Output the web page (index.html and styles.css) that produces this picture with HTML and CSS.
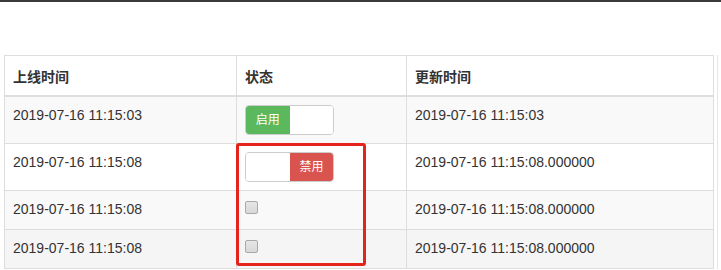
FILE: index.html
```html
<!DOCTYPE html>
<html lang="zh-CN">
<head>
<meta charset="utf-8">
<title>状态</title>
<link rel="stylesheet" href="styles.css">
</head>
<body>
<div class="topbar"></div>
<div class="spacer"></div>
<div class="wrap">
  <table class="grid">
    <thead>
      <tr>
        <th class="c1">上线时间</th>
        <th class="c2">状态</th>
        <th class="c3">更新时间</th>
      </tr>
    </thead>
    <tbody>
      <tr class="odd">
        <td>2019-07-16 11:15:03</td>
        <td><span class="switch"><span class="seg on">启用</span><span class="seg blank"></span></span></td>
        <td>2019-07-16 11:15:03</td>
      </tr>
      <tr>
        <td>2019-07-16 11:15:08</td>
        <td><span class="switch"><span class="seg blank"></span><span class="seg off">禁用</span></span></td>
        <td>2019-07-16 11:15:08.000000</td>
      </tr>
      <tr class="odd short">
        <td>2019-07-16 11:15:08</td>
        <td><input type="checkbox" class="chk"></td>
        <td>2019-07-16 11:15:08.000000</td>
      </tr>
      <tr class="hover short">
        <td>2019-07-16 11:15:08</td>
        <td><input type="checkbox" class="chk"></td>
        <td>2019-07-16 11:15:08.000000</td>
      </tr>
    </tbody>
  </table>
  <div class="highlight"></div>
</div>
</body>
</html>
```

FILE: styles.css
```css
html, body {
  margin: 0;
  padding: 0;
  background: #fff;
}
body {
  font-family: "Liberation Sans", Arial, "Noto Sans CJK SC", sans-serif;
  font-size: 14px;
  line-height: 20px;
  color: #333;
  width: 721px;
  height: 270px;
  overflow: hidden;
}
.topbar {
  height: 2px;
  background: #3a3a3a;
}
.spacer {
  height: 53px;
}
.wrap {
  position: relative;
  margin-left: 4px;
  width: 714px;
  border-right: 1px solid #e6e6e6;
  box-sizing: border-box;
}
.grid {
  table-layout: fixed;
  border-collapse: separate;
  border-spacing: 0;
  width: 710px;
  box-sizing: border-box;
  border-top: 1px solid #ddd;
  border-left: 1px solid #ddd;
}
.grid th, .grid td {
  box-sizing: border-box;
  text-align: left;
  vertical-align: top;
  border-right: 1px solid #ddd;
  border-bottom: 1px solid #ddd;
  padding: 8px 8px 8px;
  white-space: nowrap;
}
.grid th {
  font-weight: bold;
  padding: 11px 8px 8px;
  border-bottom: 2px solid #ddd;
  background: #fff;
}
.c1 { width: 232px; }
.c2 { width: 170px; }
.c3 { width: 307px; }
.grid tr.odd td { background: #f9f9f9; }
.grid tr.hover td { background: #f5f5f5; }
.grid tr.short td { padding: 8px 8px 10px; }

.switch {
  display: inline-flex;
  height: 30px;
  width: 89px;
  box-sizing: border-box;
  border: 1px solid #ccc;
  border-radius: 4px;
  overflow: hidden;
  vertical-align: top;
  background: #fff;
}
.seg {
  display: block;
  width: 44px;
  height: 28px;
  line-height: 28px;
  font-size: 12px;
  text-align: center;
  color: #fff;
}
.seg.on { background: #5cb85c; }
.seg.off { background: #d9534f; width: 43px; }
.seg.blank { background: #fff; }

.chk {
  -webkit-appearance: none;
  appearance: none;
  display: block;
  margin: 2px 0 0;
  width: 13px;
  height: 13px;
  box-sizing: border-box;
  border: 1px solid #a9a9a9;
  border-radius: 2px;
  background: linear-gradient(#e6e6e6, #d8d8d8);
}

.highlight {
  position: absolute;
  left: 232px;
  top: 88px;
  width: 130px;
  height: 123px;
  box-sizing: border-box;
  border: 3px solid #e3231c;
  border-radius: 3px;
  pointer-events: none;
}
```
